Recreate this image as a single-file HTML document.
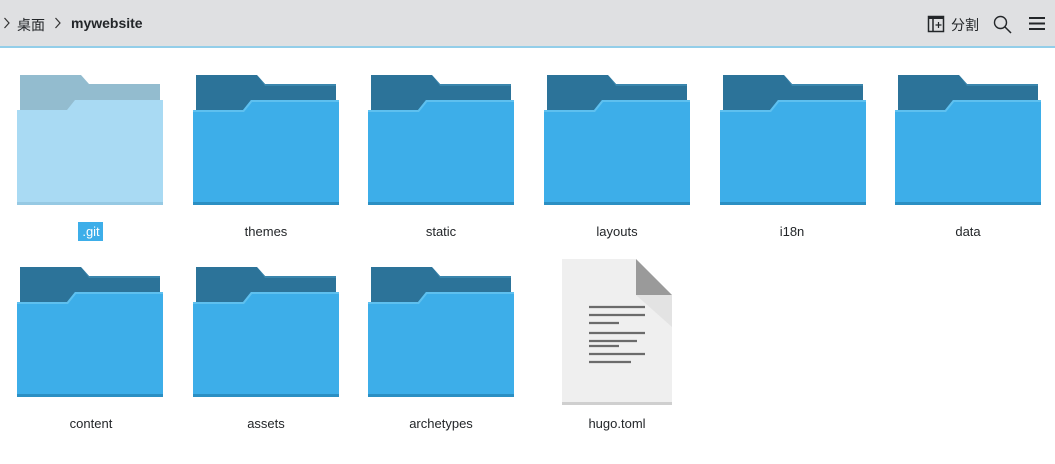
<!DOCTYPE html>
<html><head><meta charset="utf-8"><style>
body{margin:0;width:1055px;height:464px;background:#fff;position:relative;overflow:hidden;font-family:"Liberation Sans","Noto Sans CJK SC",sans-serif;}
.hdr{position:absolute;left:0;top:0;width:1055px;height:46px;background:#dfe0e2;}
.line{position:absolute;left:0;top:46px;width:1055px;height:2px;background:#93cee9;}
.t{position:absolute;font-size:13px;color:#232629;white-space:nowrap;}
.lbl{position:absolute;font-size:13px;color:#232629;width:150px;text-align:center;}
svg{position:absolute;}
</style></head><body>
<div class="hdr"></div><div class="line"></div>
<svg style="left:3px;top:16px" width="8" height="14"><path d="M1.5 2 L6 7 L1.5 12" fill="none" stroke="#333" stroke-width="1.2"/></svg>
<div class="t" style="left:17px;top:15px;font-size:14px">桌面</div>
<svg style="left:54px;top:16px" width="8" height="14"><path d="M1.5 2 L6 7 L1.5 12" fill="none" stroke="#333" stroke-width="1.2"/></svg>
<div class="t" style="left:71px;top:15px;font-size:14px;font-weight:bold">mywebsite</div>
<svg style="left:927px;top:15px" width="18" height="18"><rect x="1.5" y="1.5" width="15" height="15" fill="none" stroke="#232629" stroke-width="1.5"/><rect x="1" y="1" width="16" height="3" fill="#232629"/><line x1="6" y1="3" x2="6" y2="17" stroke="#232629" stroke-width="1.5"/><path d="M11.5 7v6M8.5 10h6" stroke="#232629" stroke-width="1.2"/></svg>
<div class="t" style="left:951px;top:15px;font-size:14px">分割</div>
<svg style="left:993px;top:15px" width="20" height="19"><circle cx="7.5" cy="7.5" r="6" fill="none" stroke="#232629" stroke-width="1.4"/><line x1="12" y1="12" x2="18" y2="18" stroke="#232629" stroke-width="1.5"/></svg>
<svg style="left:1028px;top:16px" width="18" height="15"><path d="M1 2h16M1 7.5h16M1 13h16" stroke="#232629" stroke-width="2"/></svg>

<svg width="0" height="0"><defs>
<symbol id="f" viewBox="0 0 150 135">
<path d="M3 0H64L72 9H143V40H3Z" fill="#2c7399"/>
<path d="M64 0L72 9H143V11H72Z" fill="#3a86ad"/>
<path d="M0 35H50L58 25H146V130H0Z" fill="#3daee9"/>
<path d="M0 35H50L58 25H146V27H59L51 37H0Z" fill="#5ec0ef"/>
<rect x="0" y="127" width="146" height="3" fill="#2b8fc3"/>
</symbol>
<symbol id="g" viewBox="0 0 150 135">
<path d="M3 0H64L72 9H143V40H3Z" fill="#93bccf"/>
<path d="M0 35H50L58 25H146V130H0Z" fill="#a9daf3"/>
<rect x="0" y="127" width="146" height="3" fill="#96c9e3"/>
</symbol></defs></svg>

<svg style="left:17px;top:75px" width="150" height="135"><use href="#g"/></svg>
<svg style="left:193px;top:75px" width="150" height="135"><use href="#f"/></svg>
<svg style="left:368px;top:75px" width="150" height="135"><use href="#f"/></svg>
<svg style="left:544px;top:75px" width="150" height="135"><use href="#f"/></svg>
<svg style="left:720px;top:75px" width="150" height="135"><use href="#f"/></svg>
<svg style="left:895px;top:75px" width="150" height="135"><use href="#f"/></svg>
<svg style="left:17px;top:267px" width="150" height="135"><use href="#f"/></svg>
<svg style="left:193px;top:267px" width="150" height="135"><use href="#f"/></svg>
<svg style="left:368px;top:267px" width="150" height="135"><use href="#f"/></svg>

<svg style="left:562px;top:259px" width="112" height="148">
<path d="M0 0H74L110 36V145H0Z" fill="#efefef"/>
<path d="M74 0L110 36H74Z" fill="#9a9a9a"/>
<path d="M74 36H110V68Z" fill="#e3e3e3"/>
<rect x="0" y="143" width="110" height="3" fill="#cfcfcf"/>
<g stroke="#6b6b6b" stroke-width="2.2">
<path d="M27 48H83M27 56H83M27 64H57M27 74H83M27 82H75M27 87H57M27 95H83M27 103H69"/></g>
</svg>

<div style="position:absolute;left:78px;top:222px;width:25px;height:19px;background:#3daee9"></div>
<div class="lbl" style="left:16px;top:224px;color:#fff">.git</div>
<div class="lbl" style="left:191px;top:224px">themes</div>
<div class="lbl" style="left:366px;top:224px">static</div>
<div class="lbl" style="left:542px;top:224px">layouts</div>
<div class="lbl" style="left:717px;top:224px">i18n</div>
<div class="lbl" style="left:893px;top:224px">data</div>
<div class="lbl" style="left:16px;top:416px">content</div>
<div class="lbl" style="left:191px;top:416px">assets</div>
<div class="lbl" style="left:366px;top:416px">archetypes</div>
<div class="lbl" style="left:542px;top:416px">hugo.toml</div>
</body></html>
